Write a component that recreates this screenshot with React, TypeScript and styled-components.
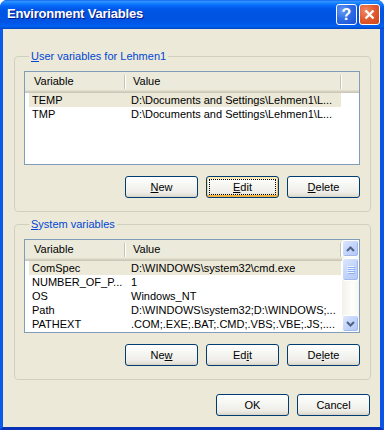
import React from 'react';
import styled, { createGlobalStyle, css } from 'styled-components';

const GlobalStyle = createGlobalStyle`
  html, body {
    margin: 0;
    padding: 0;
    background: #ffffff;
  }
  body {
    font-family: 'Liberation Sans', Arial, sans-serif;
    font-size: 11px;
    color: #000;
  }
`;

const Frame = styled.div`
  width: 384px;
  height: 430px;
  display: flex;
  flex-direction: column;
  border-radius: 7px 7px 0 0;
  overflow: hidden;
  background: #0054e3;
`;

const TitleBar = styled.div`
  height: 29px;
  flex: none;
  display: flex;
  align-items: center;
  padding: 0 4px 0 7px;
  background: linear-gradient(
    to bottom,
    #0058ee 0px,
    #3a93ff 1px,
    #288eff 2px,
    #0f7bff 4px,
    #0466f6 6px,
    #0058e8 9px,
    #0054e3 12px,
    #0054e3 21px,
    #0059eb 24px,
    #0062f3 26px,
    #0052d6 28px,
    #0041b8 29px
  );
`;

const Title = styled.div`
  flex: 1;
  color: #ffffff;
  font-weight: bold;
  font-size: 13px;
  letter-spacing: -0.2px;
  text-shadow: 1px 1px #0a1883;
  padding-bottom: 2px;
`;

const CaptionButton = styled.div<{ $close?: boolean }>`
  width: 21px;
  height: 21px;
  box-sizing: border-box;
  margin-left: 2px;
  border: 1px solid #ffffff;
  border-radius: 3px;
  display: flex;
  align-items: center;
  justify-content: center;
  color: #ffffff;
  font-weight: bold;
  font-size: 16px;
  ${(p) =>
    p.$close
      ? css`
          background: radial-gradient(circle at 30% 30%, #f08a65 0%, #e35c31 45%, #cc4614 100%);
        `
      : css`
          background: radial-gradient(circle at 30% 30%, #6a9cf6 0%, #2f6ce6 45%, #1a4fd4 100%);
        `}
`;

const Client = styled.div`
  flex: 1;
  display: flex;
  flex-direction: column;
  background: #ece9d8;
  border-left: 3px solid #0a5aec;
  border-right: 4px solid #0a55e6;
  border-bottom: 3px solid #0831b8;
  padding: 21px 9px 0 11px;
`;

const Group = styled.fieldset<{ $gap?: number }>`
  margin: ${(p) => p.$gap ?? 0}px 0 0 0;
  padding: 8px 10px 13px 9px;
  border: 1px solid #d0d0bf;
  border-radius: 4px;
  min-width: 0;
  display: flex;
  flex-direction: column;
`;

const Legend = styled.legend`
  margin-left: 5px;
  padding: 0 2px;
  line-height: 13px;
  color: #0046d5;
`;

const Key = styled.span`
  text-decoration: underline;
`;

const ListView = styled.div`
  height: 94px;
  box-sizing: border-box;
  border: 1px solid #7f9db9;
  background: #ffffff;
  display: flex;
`;

const ListBody = styled.div`
  flex: 1;
  display: flex;
  flex-direction: column;
  overflow: hidden;
`;

const Header = styled.div`
  height: 21px;
  flex: none;
  display: flex;
  background: #ebeadb;
  box-shadow: inset 0 -1px #cbc7b8, inset 0 -2px #d6d2c2, inset 0 -3px #e2decd;
`;

const HeaderCell = styled.div<{ $width: number; $pad: number }>`
  width: ${(p) => p.$width}px;
  flex: none;
  box-sizing: border-box;
  padding-left: ${(p) => p.$pad}px;
  line-height: 18px;
  background: linear-gradient(to right, #c7c5b2 50%, #ffffff 50%) right 3px / 2px 14px no-repeat;
`;

const Row = styled.div<{ $selected?: boolean }>`
  display: flex;
  height: 14px;
  line-height: 14px;
  margin-left: 4px;
  width: 312px;
  flex: none;
  background: ${(p) => (p.$selected ? '#ece9d8' : 'transparent')};
`;

const Cell = styled.div<{ $width?: number; $pad: number }>`
  ${(p) => (p.$width ? `width: ${p.$width}px; flex: none;` : 'flex: 1;')}
  box-sizing: border-box;
  padding-left: ${(p) => p.$pad}px;
  white-space: nowrap;
  overflow: hidden;
`;

const ScrollBar = styled.div`
  width: 17px;
  flex: none;
  display: flex;
  flex-direction: column;
  background: linear-gradient(to right, #f3f1ec, #fefefb 60%, #f6f5f0);
`;

const ScrollButton = styled.div<{ $thumb?: boolean }>`
  height: ${(p) => (p.$thumb ? 23 : 17)}px;
  margin-top: ${(p) => (p.$thumb ? 1 : 0)}px;
  flex: none;
  box-sizing: border-box;
  border: 1px solid #ffffff;
  border-radius: 3px;
  background: linear-gradient(135deg, #dce7fd 0%, #c6d6fb 45%, #b4c8f6 100%);
  box-shadow: inset -1px -1px #a2b8ec;
  display: flex;
  align-items: center;
  justify-content: center;
`;

const Track = styled.div`
  flex: 1;
`;

const ButtonRow = styled.div<{ $top: number; $right?: number }>`
  display: flex;
  justify-content: flex-end;
  gap: 8px;
  margin-top: ${(p) => p.$top}px;
  margin-right: ${(p) => p.$right ?? 0}px;
`;

const Button = styled.div<{ $focus?: boolean }>`
  position: relative;
  width: 73px;
  height: 22px;
  box-sizing: border-box;
  border: 1px solid #003c74;
  border-radius: 3px;
  background: linear-gradient(to bottom, #ffffff 0%, #f7f7f4 35%, #efeee9 75%, #e3e0d6 92%, #d6d0c5 100%);
  display: flex;
  align-items: center;
  justify-content: center;
  line-height: 13px;
  ${(p) =>
    p.$focus &&
    css`
      box-shadow: inset 0 2px #fde9b4, inset 0 -2px #f2b545, inset 1px 0 #f9d68a, inset -1px 0 #f4c060;
      &::after {
        content: '';
        position: absolute;
        inset: 2px;
        border: 1px dotted #000000;
      }
    `}
`;

const Arrow = ({ up }: { up?: boolean }) => (
  <svg width="9" height="6" viewBox="0 0 9 6">
    <path
      d={up ? 'M1 5 L4.5 1.5 L8 5' : 'M1 1 L4.5 4.5 L8 1'}
      fill="none"
      stroke="#4d6185"
      strokeWidth="2"
    />
  </svg>
);

const Grip = () => (
  <svg width="8" height="8" viewBox="0 0 8 8">
    {[0, 2, 4, 6].map((y) => (
      <g key={y}>
        <rect x="0" y={y} width="7" height="1" fill="#eef4fe" />
        <rect x="1" y={y + 1} width="7" height="1" fill="#8cb0f8" />
      </g>
    ))}
  </svg>
);

type Variable = { name: string; value: string };

const userVars: Variable[] = [
  { name: 'TEMP', value: 'D:\\Documents and Settings\\Lehmen1\\L...' },
  { name: 'TMP', value: 'D:\\Documents and Settings\\Lehmen1\\L...' },
];

const systemVars: Variable[] = [
  { name: 'ComSpec', value: 'D:\\WINDOWS\\system32\\cmd.exe' },
  { name: 'NUMBER_OF_P...', value: '1' },
  { name: 'OS', value: 'Windows_NT' },
  { name: 'Path', value: 'D:\\WINDOWS\\system32;D:\\WINDOWS;...' },
  { name: 'PATHEXT', value: '.COM;.EXE;.BAT;.CMD;.VBS;.VBE;.JS;....' },
];

const VariableList = ({ rows, scroll }: { rows: Variable[]; scroll?: boolean }) => (
  <ListView>
    <ListBody>
      <Header>
        <HeaderCell $width={101} $pad={9}>Variable</HeaderCell>
        <HeaderCell $width={216} $pad={7}>Value</HeaderCell>
      </Header>
      {rows.map((r, i) => (
        <Row key={r.name} $selected={i === 0}>
          <Cell $width={96} $pad={3}>{r.name}</Cell>
          <Cell $pad={6}>{r.value}</Cell>
        </Row>
      ))}
    </ListBody>
    {scroll && (
      <ScrollBar>
        <ScrollButton>
          <Arrow up />
        </ScrollButton>
        <ScrollButton $thumb>
          <Grip />
        </ScrollButton>
        <Track />
        <ScrollButton>
          <Arrow />
        </ScrollButton>
      </ScrollBar>
    )}
  </ListView>
);

export default function App() {
  return (
    <>
      <GlobalStyle />
      <Frame>
        <TitleBar>
          <Title>Environment Variables</Title>
          <CaptionButton>?</CaptionButton>
          <CaptionButton $close>
            <svg width="11" height="11" viewBox="0 0 11 11">
              <path d="M1.5 1.5 L9.5 9.5 M9.5 1.5 L1.5 9.5" stroke="#ffffff" strokeWidth="2.4" />
            </svg>
          </CaptionButton>
        </TitleBar>
        <Client>
          <Group>
            <Legend>
              <Key>U</Key>ser variables for Lehmen1
            </Legend>
            <VariableList rows={userVars} />
            <ButtonRow $top={11}>
              <Button>
                <Key>N</Key>ew
              </Button>
              <Button $focus>
                <Key>E</Key>dit
              </Button>
              <Button>
                <Key>D</Key>elete
              </Button>
            </ButtonRow>
          </Group>
          <Group $gap={6}>
            <Legend>
              <Key>S</Key>ystem variables
            </Legend>
            <VariableList rows={systemVars} scroll />
            <ButtonRow $top={11}>
              <Button>
                Ne<Key>w</Key>
              </Button>
              <Button>
                Ed<Key>i</Key>t
              </Button>
              <Button>
                De<Key>l</Key>ete
              </Button>
            </ButtonRow>
          </Group>
          <ButtonRow $top={14} $right={1}>
            <Button>OK</Button>
            <Button>Cancel</Button>
          </ButtonRow>
        </Client>
      </Frame>
    </>
  );
}
